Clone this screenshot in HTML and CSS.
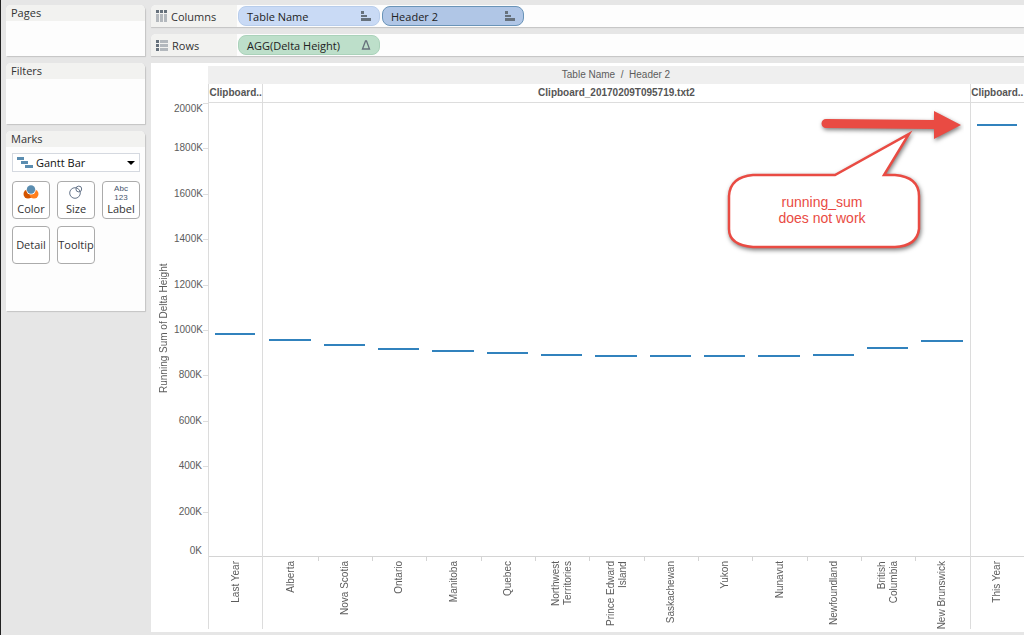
FILE: index.html
```html
<!DOCTYPE html>
<html lang="en">
<head>
<meta charset="UTF-8" />
<meta name="viewport" content="width=device-width, initial-scale=1" />
<title>Running Sum of Delta Height</title>
<link rel="stylesheet" href="styles.css">
</head>
<body>

<aside class="sidebar">
  <section class="card pages">
    <h2>Pages</h2>
  </section>
  <section class="card filters">
    <h2>Filters</h2>
  </section>
  <section class="card marks">
    <h2>Marks</h2>
    <div class="marks-body">
      <div class="mark-type">
        <svg width="16" height="11" viewBox="0 0 16 11" fill="#5b8db0"><path d="M0 0h7v3H0zM4 4h7v3H4zM8 8h8v3H8z"/></svg>
        <select aria-label="Mark type">
          <option>Gantt Bar</option>
        </select>
        <svg class="caret" width="8" height="4" viewBox="0 0 8 4"><path d="M0 0h8L4 4z"/></svg>
      </div>
      <div class="mark-buttons">
        <button>
          <svg width="16" height="14" viewBox="0 0 16 14"><circle cx="5" cy="9" r="4.500" fill="#d35400"/><circle cx="11" cy="9" r="4.500" fill="#ff7f1e"/><circle cx="8" cy="4.800" r="4.800" fill="#fff"/><circle cx="8" cy="4.500" r="4.200" fill="#5b8db0"/></svg>
          Color
        </button>
        <button>
          <svg width="14" height="14" viewBox="0 0 14 14" fill="none" stroke="#66758a"><circle cx="6" cy="8" r="5.300"/><circle cx="9.800" cy="4" r="2.900"/></svg>
          Size
        </button>
        <button class="label-button">
          <span class="abc">Abc</span>
          <span class="abc">123</span>
          Label
        </button>
        <button>Detail</button>
        <button>Tooltip</button>
      </div>
    </div>
  </section>
</aside>

<main>
  <div class="shelf">
    <div class="shelf-name">
      <svg width="11" height="12" viewBox="0 0 11 12"><path d="M0 0h3v3H0zM4 0h3v3H4zM8 0h3v3H8z" fill="#66717c"/><path d="M0 4h3v8H0zM4 4h3v8H4zM8 4h3v8H8z" fill="#b3b8bd"/></svg>
      Columns
    </div>
    <div class="pills">
      <button class="pill blue">Table Name
        <svg width="10" height="10" viewBox="0 0 10 10" fill="#66717c"><path d="M0 0h3v3H0zM0 4h6v2H0zM0 7h10v3H0z"/></svg>
      </button>
      <button class="pill blue selected">Header 2
        <svg width="10" height="10" viewBox="0 0 10 10" fill="#66717c"><path d="M0 0h3v3H0zM0 4h6v2H0zM0 7h10v3H0z"/></svg>
      </button>
    </div>
  </div>
  <div class="shelf">
    <div class="shelf-name">
      <svg width="12" height="11" viewBox="0 0 12 11"><path d="M0 0h3v3H0zM0 4h3v3H0zM0 8h3v3H0z" fill="#66717c"/><path d="M4 0h8v3H4zM4 4h8v3H4zM4 8h8v3H4z" fill="#b3b8bd"/></svg>
      Rows
    </div>
    <div class="pills">
      <button class="pill green">AGG(Delta Height)
        <svg width="10" height="10" viewBox="0 0 10 10" fill="none" stroke="#66717c" stroke-width="1.300"><path d="M1.500 9L4.500 1h1L8.500 9z"/></svg>
      </button>
    </div>
  </div>

  <div class="view">
    <div class="axis-title">Running Sum of Delta Height</div>
    <div class="axis">
      <div class="step"><span>2000K</span></div>
      <div class="step"><span>1800K</span></div>
      <div class="step"><span>1600K</span></div>
      <div class="step"><span>1400K</span></div>
      <div class="step"><span>1200K</span></div>
      <div class="step"><span>1000K</span></div>
      <div class="step"><span>800K</span></div>
      <div class="step"><span>600K</span></div>
      <div class="step"><span>400K</span></div>
      <div class="step"><span>200K</span><span class="zero">0K</span></div>
    </div>
    <div class="chart">
      <div class="chart-title">Table Name&nbsp; /&nbsp; Header 2</div>
      <div class="panes">
        <div class="pane">
          <div class="pane-name">Clipboard..</div>
          <div class="plot">
            <div class="bar" style="height:49.2%"></div>
          </div>
          <div class="labels">
            <div><span>Last Year</span></div>
          </div>
        </div>
        <div class="pane">
          <div class="pane-name">Clipboard_20170209T095719.txt2</div>
          <div class="plot">
            <div class="bar" style="height:47.9%"></div>
            <div class="bar" style="height:46.7%"></div>
            <div class="bar" style="height:45.9%"></div>
            <div class="bar" style="height:45.4%"></div>
            <div class="bar" style="height:45.1%"></div>
            <div class="bar" style="height:44.7%"></div>
            <div class="bar" style="height:44.4%"></div>
            <div class="bar" style="height:44.4%"></div>
            <div class="bar" style="height:44.4%"></div>
            <div class="bar" style="height:44.4%"></div>
            <div class="bar" style="height:44.7%"></div>
            <div class="bar" style="height:46.1%"></div>
            <div class="bar" style="height:47.7%"></div>
          </div>
          <div class="labels">
            <div><span>Alberta</span></div>
            <div><span>Nova Scotia</span></div>
            <div><span>Ontario</span></div>
            <div><span>Manitoba</span></div>
            <div><span>Quebec</span></div>
            <div><span>Northwest<br>Territories</span></div>
            <div><span>Prince Edward<br>Island</span></div>
            <div><span>Saskachewan</span></div>
            <div><span>Yukon</span></div>
            <div><span>Nunavut</span></div>
            <div><span>Newfoundland</span></div>
            <div><span>British<br>Columbia</span></div>
            <div><span>New Brunswick</span></div>
          </div>
        </div>
        <div class="pane">
          <div class="pane-name">Clipboard..</div>
          <div class="plot">
            <div class="bar" style="height:95.3%"></div>
          </div>
          <div class="labels">
            <div><span>This Year</span></div>
          </div>
        </div>
      </div>
    </div>

    <!-- arrow and speech bubble over the chart -->
    <svg class="note" width="244" height="150" viewBox="720 105 244 150">
      <g class="shadow">
        <path d="M826 119L934 120V111L961 125L934 139V129L826 128A4.500 4.500 0 0 1 826 119z" fill="#e94b43"/>
        <path d="M753 175H835L909 134L884 175H895Q919 177 919 196V229Q917 246 895 247H753Q729 245 729 229V196Q730 177 753 175z" fill="#fff" stroke="#e94b43" stroke-width="2.500"/>
      </g>
      <text x="822" y="207">running_sum</text>
      <text x="822" y="223">does not work</text>
    </svg>
  </div>
</main>

</body>
</html>
```

FILE: styles.css
```css
* {
  box-sizing: border-box;
}
body {
  margin: 0;
  min-height: 100vh;
  display: flex;
  background: #e6e6e6;
  border-left: 1px solid #222;
  font-family: "Open Sans", "Noto Sans", sans-serif;
  font-size: 11px;
  color: #333;
}
button, select {
  font: inherit;
  color: inherit;
}

/* Sidebar */
.sidebar {
  width: 150px;
  flex: none;
  padding: 5px 6px 0 5px;
  display: flex;
  flex-direction: column;
  gap: 7px;
}
.card {
  background: #fdfdfd;
  border-radius: 5px 5px 0 0;
  box-shadow: 1px 1px 1px #c4c4c4;
  overflow: hidden;
}
.card h2 {
  margin: 0;
  padding: 0 5px;
  background: #f2f2f0;
  font-size: 11px;
  font-weight: 400;
  line-height: 16px;
}
.pages {
  min-height: 51px;
}
.filters {
  min-height: 61px;
}
.marks {
  min-height: 180px;
}
.marks-body {
  padding: 6px 5px 0 6px;
}
.mark-type {
  display: flex;
  align-items: center;
  gap: 3px;
  height: 19px;
  padding: 0 4px;
  border: 1px solid #d5d9e0;
  background: #fff;
}
.mark-type select {
  flex: 1;
  min-width: 0;
  padding: 0;
  border: none;
  background: none;
  appearance: none;
  color: #111;
}
.mark-buttons {
  display: grid;
  grid-template-columns: repeat(3, 38px);
  justify-content: space-between;
  gap: 7px;
  margin-top: 9px;
}
.mark-buttons button {
  height: 38px;
  padding: 0;
  border: 1px solid #ababab;
  border-radius: 4px;
  background: #fff;
  display: flex;
  flex-direction: column;
  align-items: center;
  justify-content: center;
  gap: 3px;
  line-height: 14px;
}
.mark-buttons .label-button {
  gap: 0;
}
.abc {
  font-family: "Liberation Sans", Arial, sans-serif;
  font-size: 8px;
  line-height: 9px;
  color: #44546c;
}

/* Shelves */
main {
  flex: 1;
  min-width: 0;
  padding: 5px 0 3px;
  display: flex;
  flex-direction: column;
  gap: 7px;
}
.shelf {
  display: flex;
  height: 22px;
  background: #fdfdfd;
  border-radius: 5px 0 0 0;
  box-shadow: 0 1px 1px #c4c4c4;
  overflow: hidden;
}
.shelf-name {
  width: 86px;
  padding-left: 5px;
  display: flex;
  align-items: center;
  gap: 4px;
  background: #f2f2f0;
}
.pills {
  display: flex;
  align-items: center;
  gap: 2px;
  padding-left: 1px;
}
.pill {
  width: 142px;
  height: 20px;
  padding: 0 8px;
  display: flex;
  align-items: center;
  justify-content: space-between;
  border: 1px solid #b8cdeb;
  border-radius: 8px;
  color: #222;
}
.pill.blue {
  background: #c9daf5;
}
.pill.selected {
  background: #b0c6e6;
  border-color: #6a94b8;
}
.pill.green {
  background: #bddfca;
  border-color: #aad2ba;
}

/* Chart */
.view {
  flex: 1;
  position: relative;
  display: flex;
  padding: 3px 0;
  background: #fff;
  font-family: "Liberation Sans", Arial, sans-serif;
  font-size: 10px;
  line-height: 12px;
  color: #5c5c5c;
}
.axis-title {
  flex: none;
  width: 23px;
  padding: 73px 7px 34px 4px;
  writing-mode: vertical-rl;
  transform: rotate(180deg);
  text-align: center;
}
.axis {
  flex: none;
  width: 34px;
  padding: 37px 0 72px;
  display: flex;
  flex-direction: column;
}
.step {
  flex: 1;
  display: flex;
  flex-direction: column;
  justify-content: space-between;
  text-align: right;
  padding-right: 6px;
  background: linear-gradient(#ddd, #ddd) right top / 5px 1px no-repeat;
}
.step span {
  margin-top: -6px;
}
.step:first-child span,
.step .zero {
  margin-top: 0;
}
.chart {
  flex: 1;
  min-width: 0;
  display: flex;
  flex-direction: column;
}
.chart-title {
  background: #efefef;
  line-height: 18px;
  text-align: center;
}
.panes {
  flex: 1;
  display: grid;
  grid-template-columns: 1fr 13fr 1fr;
}
.pane {
  min-width: 0;
  display: flex;
  flex-direction: column;
  border-left: 1px solid #dcdcdc;
}
.pane-name {
  line-height: 18px;
  font-weight: 700;
  color: #555;
  text-align: center;
  white-space: nowrap;
  border-bottom: 1px solid #ddd;
}
.plot {
  flex: 1;
  display: flex;
  align-items: flex-end;
  border-bottom: 1px solid #d4d4d4;
}
.bar {
  flex: 1;
  margin: 0 7px 0 6px;
  border-top: 2px solid #3182bd;
}
.labels {
  display: flex;
  height: 72px;
}
.labels div {
  flex: 1;
  display: flex;
  justify-content: center;
  align-items: flex-start;
  padding-top: 4px;
  background: linear-gradient(#d4d4d4, #d4d4d4) left top / 1px 4px no-repeat;
}
.labels div:first-child {
  background: none;
}
.labels span {
  writing-mode: vertical-rl;
  transform: rotate(180deg);
  text-align: right;
  white-space: nowrap;
}

/* Note */
.note {
  position: absolute;
  top: 42px;
  right: 60px;
}
.note .shadow {
  filter: drop-shadow(1px 2px 2px rgba(0, 0, 0, 0.5));
}
.note text {
  font-size: 14px;
  fill: #e94b43;
  text-anchor: middle;
}
```
